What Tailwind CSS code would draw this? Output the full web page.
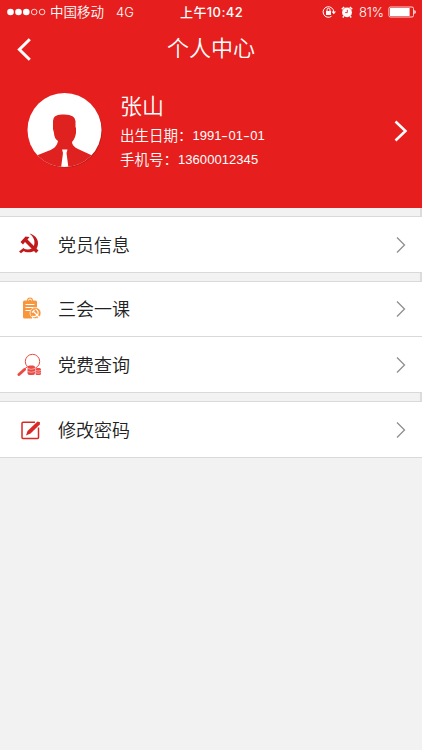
<!DOCTYPE html>
<html lang="zh-CN">
<head>
  <meta charset="UTF-8">
  <meta name="viewport" content="width=device-width, initial-scale=1.0">
  <title>个人中心</title>
  <script src="https://cdn.jsdelivr.net/npm/@tailwindcss/browser@4"></script>
</head>
<body class="w-[422px] h-[750px] overflow-hidden bg-[#f2f2f2] font-['Liberation_Sans','Noto_Sans_CJK_SC',sans-serif] text-[#222]">
  <header class="h-[208px] bg-[#e61f1e] text-white">
    <!-- status bar -->
    <div class="relative h-6 flex items-center pl-[7px] pr-[6px] text-[13px] leading-6 font-['Inter','Noto_Sans_CJK_SC',sans-serif]">
      <svg class="w-[39px] h-2" viewBox="0 0 39 8" fill="#fff">
        <circle cx="3.5" cy="4" r="3.3"/><circle cx="11.5" cy="4" r="3.3"/><circle cx="19.3" cy="4" r="3.3"/>
        <g fill="none" stroke="#fff" stroke-width=".8"><circle cx="27.2" cy="4" r="2.8"/><circle cx="35.1" cy="4" r="2.8"/></g>
      </svg>
      <span class="ml-1 text-[13.5px] font-[350]">中国移动</span>
      <span class="ml-3 text-[13px] font-[350]">4G</span>
      <span class="absolute left-[180px] font-medium whitespace-nowrap tracking-[0.4px]">上午10:42</span>
      <svg class="ml-auto w-[14px] h-[14px]" viewBox="0 0 14 14" fill="none" stroke="#fff">
        <path d="M11.7 7A5.3 5.3 0 1 0 9.5 11.3"/>
        <path d="M9.500 6.5h4.500l-2.200 2.8z" fill="#fff" stroke="none"/>
        <rect x="4" y="6" width="5" height="4" fill="#fff" stroke="none"/>
        <path d="M5 6V4.8a1.5 1.5 0 0 1 3 0V6"/>
      </svg>
      <svg class="ml-[5px] w-[12px] h-[12px]" viewBox="0 0 12 12">
        <circle cx="6" cy="6.4" r="4.9" fill="#fff"/>
        <path d="M.8 3.2 3.2 1M8.8 1l2.4 2.2M2.8 10.2l-1 1.2M9.2 10.2l1 1.2" stroke="#fff" stroke-width="1.5"/>
        <path d="M6.3 3.8v2.8H4.2" fill="none" stroke="#e61f1e" stroke-width=".9"/>
      </svg>
      <span class="ml-[6px] w-[28px] text-[13px] font-[350] tracking-[-0.2px]">81%</span>
      <svg class="ml-px w-[28px] h-[12px]" viewBox="0 0 28 12">
        <rect x=".9" y="1" width="24.6" height="10" rx="1.5" fill="none" stroke="#fff" stroke-width=".8"/>
        <rect x="2" y="2" width="19.6" height="8" fill="#fff"/>
        <path d="M26.3 4v4q1.5-.5 1.5-2t-1.5-2" fill="#fff"/>
      </svg>
    </div>
    <!-- title bar -->
    <div class="relative h-[48px] flex justify-center font-['Noto_Sans_CJK_SC',sans-serif] font-[350]">
      <svg class="absolute left-4 top-[14px] w-4 h-[23px]" viewBox="0 0 16 23" fill="none" stroke="#fff" stroke-width="3">
        <path d="M13.8 1.2 3.4 11.5 13.8 21.8"/>
      </svg>
      <h1 class="text-[22px] leading-[45px]">个人中心</h1>
    </div>
    <!-- profile -->
    <div class="flex pl-[27px] pr-[14px] pt-[20px]">
      <svg class="w-[76px] h-[77px]" viewBox="0 0 76 77">
        <defs><clipPath id="face"><circle cx="37.5" cy="38" r="37"/></clipPath></defs>
        <circle cx="38.3" cy="38.800" r="37" fill="#bd1b19"/>
        <circle cx="37.5" cy="38" r="37" fill="#fff"/>
        <g clip-path="url(#face)">
          <path d="M0 68 11 63 21 59C27 57 30 54 31 49Q27 46 27 41L26 37V29Q26 22 36 22.500Q48 22 48.500 29V35L49 36V41Q48 47 45 50Q45 54 51 57L64 63 75 67V77H0z" fill="#df211f"/>
          <path d="M35 57.500h5.500L39.500 61 41.500 76H34L36 61z" fill="#fff"/>
        </g>
      </svg>
      <div class="ml-[17px] font-['Noto_Sans_CJK_SC',sans-serif] font-[350]">
        <div class="-mt-[2px] text-[22px] leading-[28px]">张山</div>
        <div class="mt-[5px] flex text-[14.500px] leading-6">出生日期：<span class="pt-px font-['Liberation_Sans',sans-serif] text-[13px]">1991<i class="inline-block w-[7.2px] text-center not-italic scale-x-160">-</i>01<i class="inline-block w-[7.2px] text-center not-italic scale-x-160">-</i>01</span></div>
        <div class="-mt-px flex text-[14.500px] leading-6">手机号：<span class="pt-px font-['Liberation_Sans',sans-serif] text-[13px] tracking-[0.06px]">13600012345</span></div>
      </div>
      <svg class="ml-auto mt-[28px] w-[14px] h-[22px]" viewBox="0 0 14 22" fill="none" stroke="#fff" stroke-width="2.500">
        <path d="M1.500 1.500 11.500 11 1.500 20.500"/>
      </svg>
    </div>
  </header>

  <main class="font-['Noto_Sans_CJK_SC',sans-serif] text-[18px] font-[350]">
    <div class="h-2 border-r-2 border-[#dcdcdc]"></div>
    <section class="bg-white border-y border-[#d9d9d9]">
      <a class="h-[55px] flex items-center pl-[17px] pr-[15px]">
        <svg class="w-[26px] h-[26px]" viewBox="0 0 26 26" fill="#c21a1b">
          <path d="M12.500 1.500C19 3 22.500 9 20.500 14.500C18.500 20.500 11 22 5.500 18.500L6.500 16.500C11 18.500 15.500 17.500 17 13.500C18.500 9 16.500 4.500 12.500 1.500z"/>
          <path d="M3.500 10 8.500 4.500 12.500 5 10.500 7.500 21.500 18.500 19 21 8 10 6 12.500z"/>
          <path d="M6.500 16 8 18 4 21.300 2 19.500z"/>
        </svg>
        <span class="ml-[15px]">党员信息</span>
        <svg class="ml-auto w-[12px] h-[18px]" viewBox="0 0 12 18" fill="none" stroke="#8e8e8e" stroke-width="1.300"><path d="M2 1.500 9.500 9 2 16.500"/></svg>
      </a>
    </section>
    <div class="h-2 border-r-2 border-[#dcdcdc]"></div>
    <section class="bg-white border-y border-[#d9d9d9]">
      <a class="h-[54px] flex items-center pl-[17px] pr-[15px]">
        <svg class="w-[26px] h-[26px]" viewBox="0 0 26 26">
          <path d="M7.500 4.500H10Q10 1.500 13 1.500T16 4.500H18.500Q20 4.500 20 6V12L15 15 15 22.500H7.500Q6 22.500 6 21V6Q6 4.500 7.500 4.500" fill="#f8963e"/>
          <path d="M11.500 4.500a1.500 1.500 0 0 1 3 0M8.500 8.500h9M8.500 11.500h8M8.500 14.500h5" fill="none" stroke="#fff"/>
          <circle cx="18.500" cy="17" r="5.500" fill="#f8963e" stroke="#fff" stroke-width=".7"/>
          <path d="M18.500 13q4.500 3 1.500 6.500-3 2-5 .5M15 16.500l2.500-2.500M16.500 15.500l5.500 5.500" fill="none" stroke="#fff" stroke-width="1.200"/>
        </svg>
        <span class="ml-[15px] -mt-px">三会一课</span>
        <svg class="ml-auto w-[12px] h-[18px]" viewBox="0 0 12 18" fill="none" stroke="#8e8e8e" stroke-width="1.300"><path d="M2 1.500 9.500 9 2 16.500"/></svg>
      </a>
      <a class="h-[56px] flex items-center border-t border-[#d9d9d9] pl-[17px] pr-[15px]">
        <svg class="w-[26px] h-[26px]" viewBox="0 0 26 26">
          <circle cx="15.500" cy="9.500" r="7.200" fill="none" stroke="#ea4b45"/>
          <path d="M10 15 7.500 17" stroke="#ea4b45"/>
          <path d="M7.500 17.500 2 22.500" stroke="#ea4b45" stroke-width="3" stroke-linecap="round"/>
          <rect x="10.500" y="13.500" width="7.500" height="9.500" rx="2" fill="#ea4b45"/>
          <rect x="18.500" y="16" width="5.500" height="7" rx="1.500" fill="#ea4b45"/>
          <path d="M10.500 16.500q3.700 1.600 7.500 0M10.500 19.500q3.700 1.600 7.500 0M18.500 18.500q2.700 1 5.500 0M18.500 20.700q2.700 1 5.500 0" fill="none" stroke="#fff" stroke-width=".5"/>
        </svg>
        <span class="ml-[15px]">党费查询</span>
        <svg class="ml-auto w-[12px] h-[18px]" viewBox="0 0 12 18" fill="none" stroke="#8e8e8e" stroke-width="1.300"><path d="M2 1.500 9.500 9 2 16.500"/></svg>
      </a>
    </section>
    <div class="h-2 border-r-2 border-[#dcdcdc]"></div>
    <section class="bg-white border-y border-[#d9d9d9]">
      <a class="h-[55px] flex items-center pl-[17px] pr-[15px]">
        <svg class="w-[26px] h-[26px]" viewBox="0 0 26 26">
          <path d="M18 5.200H6Q5 5.200 5 6.200V20.500Q5 21.500 6 21.500H20.500Q21.500 21.500 21.500 20.500V10.500" fill="none" stroke="#d92825" stroke-width="1.500"/>
          <path d="M9 18.500 10.500 14 20.500 4.500 23 5.200 22.800 7.500 13.500 16.500z" fill="#d92825"/>
        </svg>
        <span class="ml-[15px]">修改密码</span>
        <svg class="ml-auto w-[12px] h-[18px]" viewBox="0 0 12 18" fill="none" stroke="#8e8e8e" stroke-width="1.300"><path d="M2 1.500 9.500 9 2 16.500"/></svg>
      </a>
    </section>
  </main>
</body>
</html>
